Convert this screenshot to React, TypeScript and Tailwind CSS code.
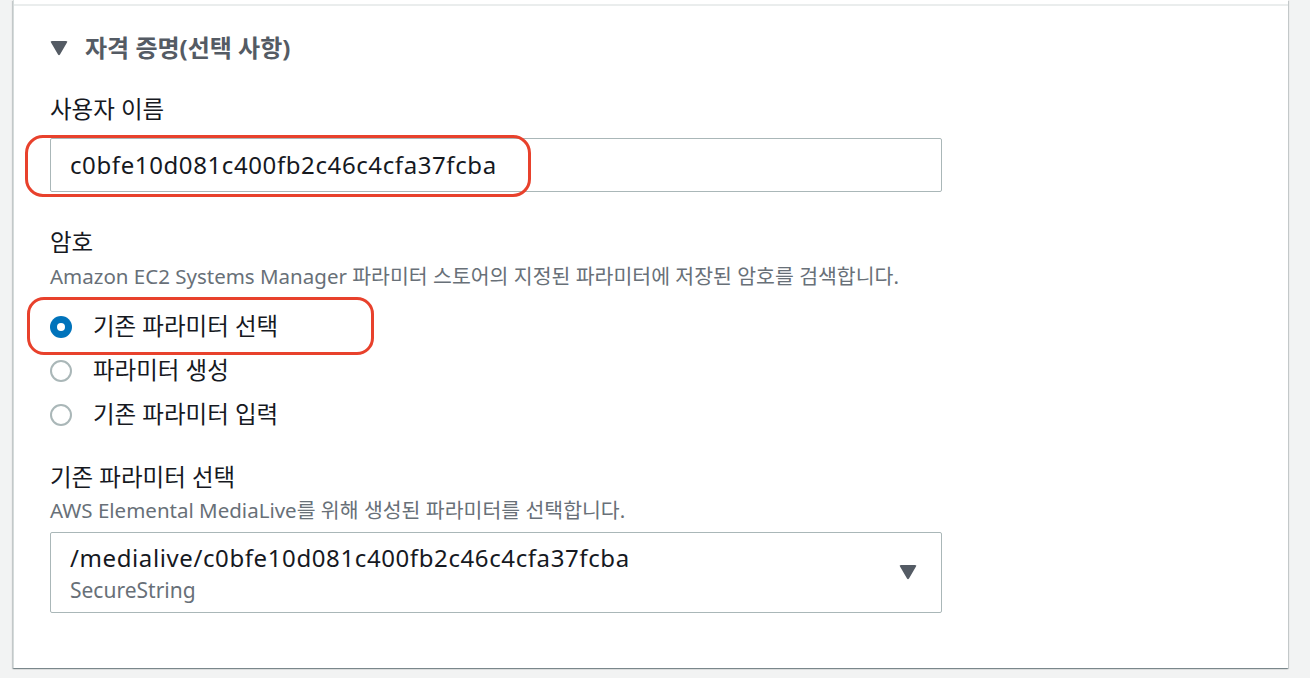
export default function App() {
  return (
    <div
      className="relative h-[678px] w-[1310px] overflow-hidden bg-[#f2f3f3] pl-[13px] pr-[22px]"
      style={{ fontFamily: '"Noto Sans", "Noto Sans CJK KR", sans-serif' }}
    >
      <div className="h-[668px] border-l border-[#d5dbdb] bg-white shadow-[0_1px_1px_0_rgba(0,28,36,0.3),1px_1px_1px_0_rgba(0,28,36,0.15),-1px_1px_1px_0_rgba(0,28,36,0.15)]">
        <div className="h-[4px]" />
        <div className="h-[2px] bg-[#eaeded]" />

        <div className="pl-[36px]">
          <div className="mt-[28px] flex h-[28px] items-center gap-[17px] text-[#545b64]">
            <Caret className="h-[15px] w-[18px]" />
            <span className="text-[24px] font-bold">자격 증명(선택 사항)</span>
          </div>

          <div className="mt-[34px] flex h-[28px] items-center text-[23.5px] text-[#16191f]">사용자 이름</div>
          <div className="mt-[14px] flex h-[54px] w-[892px] items-center rounded-[2px] border border-[#aab7b8] px-[19px] text-[24px] tracking-[0.6px] text-[#16191f]">
            c0bfe10d081c400fb2c46c4cfa37fcba
          </div>

          <div className="mt-[37px] flex h-[28px] items-center text-[23.5px] text-[#16191f]">암호</div>
          <div className="mt-[4px] flex h-[30px] items-center text-[20.5px] text-[#687078]">
            Amazon EC2 Systems Manager 파라미터 스토어의 지정된 파라미터에 저장된 암호를 검색합니다.
          </div>

          <div className="mt-[14px] flex flex-col">
            <Radio checked label="기존 파라미터 선택" />
            <Radio label="파라미터 생성" />
            <Radio label="기존 파라미터 입력" />
          </div>

          <div className="mt-[27px] flex h-[28px] items-center text-[23.5px] text-[#16191f]">기존 파라미터 선택</div>
          <div className="mt-[3px] flex h-[30px] items-center text-[20.5px] text-[#687078]">
            AWS Elemental MediaLive를 위해 생성된 파라미터를 선택합니다.
          </div>

          <div className="mt-[7px] flex h-[81px] w-[892px] items-start justify-between rounded-[2px] border border-[#aab7b8] pl-[19px] pr-[24px] pt-[10px]">
            <div className="flex flex-col">
              <span className="text-[24px] leading-[30px] tracking-[0.6px] text-[#16191f]">
                /medialive/c0bfe10d081c400fb2c46c4cfa37fcba
              </span>
              <span className="text-[21px] leading-[34px] text-[#687078]">SecureString</span>
            </div>
            <Caret className="mt-[22px] h-[15px] w-[18px] text-[#545b64]" />
          </div>
        </div>
      </div>

      <div className="pointer-events-none absolute left-[25px] top-[135px] h-[62px] w-[506px] rounded-[18px] border-[3px] border-[#e8412c]" />
      <div className="pointer-events-none absolute left-[27px] top-[297px] h-[58px] w-[347px] rounded-[17px] border-[3px] border-[#e8412c]" />
    </div>
  );
}

function Caret({ className }: { className?: string }) {
  return (
    <svg viewBox="0 0 18 15" className={className} fill="currentColor">
      <path d="M1 1.5 Q0 0 2 0 H16 Q18 0 17 1.5 L10 13.5 Q9 15 8 13.5 Z" />
    </svg>
  );
}

function Radio({ label, checked }: { label: string; checked?: boolean }) {
  return (
    <div className="flex h-[44px] items-center gap-[21px]">
      {checked ? (
        <span className="flex h-[22px] w-[22px] items-center justify-center rounded-full bg-[#0073bb]">
          <span className="h-[8px] w-[8px] rounded-full bg-white" />
        </span>
      ) : (
        <span className="h-[22px] w-[22px] rounded-full border-2 border-[#aab7b8]" />
      )}
      <span className="text-[23.5px] text-[#16191f]">{label}</span>
    </div>
  );
}
